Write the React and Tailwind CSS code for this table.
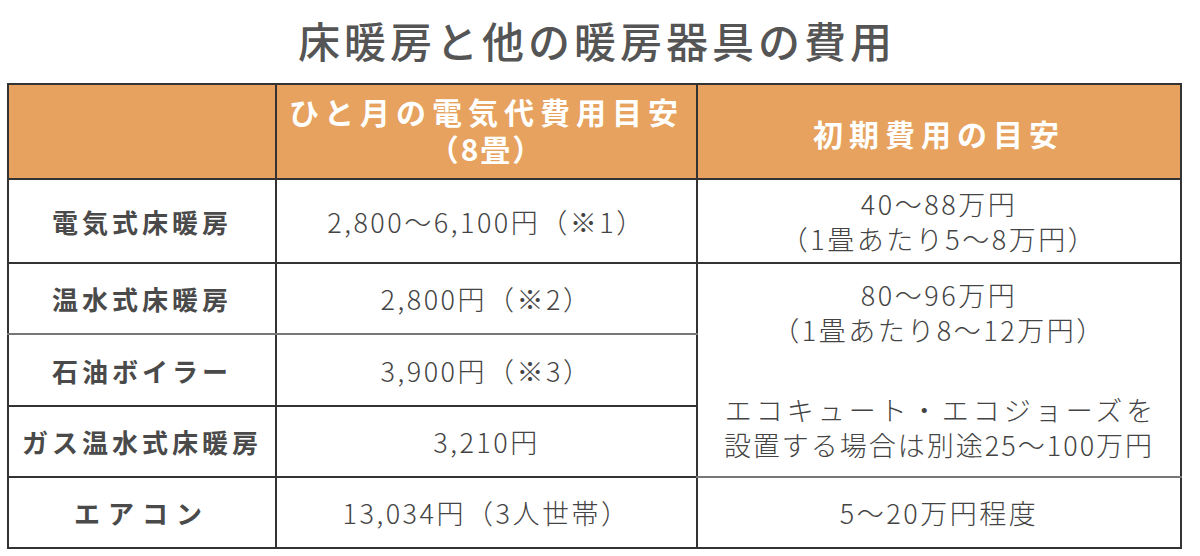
import React from "react";

const jp = { fontFamily: '"Noto Sans CJK JP", "Noto Sans", sans-serif' };

export default function App() {
  const label = "text-[26px] font-bold text-[#4a4a4a] tracking-[4px] text-center align-middle";
  const val = "text-[27px] font-light text-[#444] text-center align-middle leading-[35px] tracking-[2.5px]";
  return (
    <div className="w-[1200px] h-[556px] bg-white overflow-hidden" style={jp}>
      <h1 className="h-[83px] pt-[10px] text-center text-[42px] leading-[60px] font-medium text-[#555] tracking-[4px] pr-[6px]">
        床暖房と他の暖房器具の費用
      </h1>
      <table className="ml-[7px] w-[1173px] table-fixed border-collapse">
        <colgroup>
          <col className="w-[268px]" />
          <col className="w-[421px]" />
          <col className="w-[484px]" />
        </colgroup>
        <thead>
          <tr className="h-[95px] bg-[#e6a25e]">
            <th className="border-2 border-[#333]"></th>
            <th className="border-2 border-[#333] text-white text-[30px] font-bold tracking-[6px] leading-[37px] align-middle pb-[4px]">
              <div>ひと月の電気代費用目安</div>
              <div className="tracking-[2px]">（8畳）</div>
            </th>
            <th className="border-2 border-[#333] text-white text-[30px] font-bold tracking-[6px] align-middle pt-[4px]">
              初期費用の目安
            </th>
          </tr>
        </thead>
        <tbody>
          <tr className="h-[84px]">
            <td className={`border-2 border-[#333] ${label}`}>電気式床暖房</td>
            <td className={`border-2 border-[#333] ${val}`}>2,800〜6,100円（※1）</td>
            <td className={`border-2 border-[#333] ${val}`}>
              <div>40〜88万円</div>
              <div>（1畳あたり5〜8万円）</div>
            </td>
          </tr>
          <tr className="h-[71px]">
            <td className={`border-2 border-[#333] border-b-[#777] ${label}`}>温水式床暖房</td>
            <td className={`border-2 border-[#333] border-b-[#777] ${val}`}>2,800円（※2）</td>
            <td rowSpan={3} className={`border-2 border-[#333] border-b-[#777] ${val} align-top`}>
              <div className="flex flex-col justify-between h-[210px] pt-[13px] pb-[12px]">
                <div>
                  <div>80〜96万円</div>
                  <div>（1畳あたり8〜12万円）</div>
                </div>
                <div>
                  <div className="tracking-[4px] pl-[4px]">エコキュート・エコジョーズを</div>
                  <div className="tracking-[2px]">設置する場合は別途25〜100万円</div>
                </div>
              </div>
            </td>
          </tr>
          <tr className="h-[72px]">
            <td className={`border-2 border-[#333] ${label}`}>石油ボイラー</td>
            <td className={`border-2 border-[#333] ${val}`}>3,900円（※3）</td>
          </tr>
          <tr className="h-[71px]">
            <td className={`border-2 border-[#333] ${label}`}>ガス温水式床暖房</td>
            <td className={`border-2 border-[#333] ${val}`}>3,210円</td>
          </tr>
          <tr className="h-[71px]">
            <td className={`border-2 border-[#333] ${label} tracking-[8px]`}>エアコン</td>
            <td className={`border-2 border-[#333] ${val}`}>13,034円（3人世帯）</td>
            <td className={`border-2 border-[#333] ${val}`}>5〜20万円程度</td>
          </tr>
        </tbody>
      </table>
    </div>
  );
}
